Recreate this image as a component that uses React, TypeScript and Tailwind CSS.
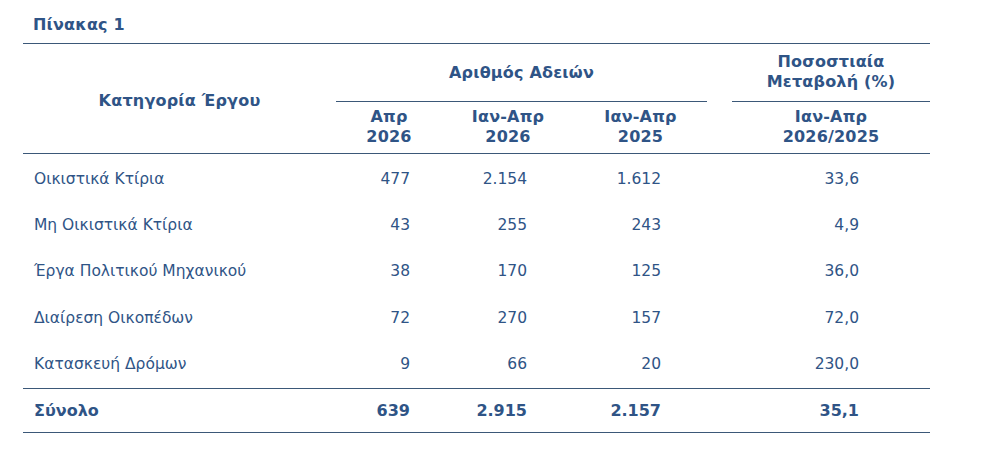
import React from 'react';

const rows = [
  { label: 'Οικιστικά Κτίρια', a: '477', b: '2.154', c: '1.612', d: '33,6' },
  { label: 'Μη Οικιστικά Κτίρια', a: '43', b: '255', c: '243', d: '4,9' },
  { label: 'Έργα Πολιτικού Μηχανικού', a: '38', b: '170', c: '125', d: '36,0' },
  { label: 'Διαίρεση Οικοπέδων', a: '72', b: '270', c: '157', d: '72,0' },
  { label: 'Κατασκευή Δρόμων', a: '9', b: '66', c: '20', d: '230,0' },
];

const cols = 'grid grid-cols-[313px_106px_132px_133px_25px_198px]';

export default function App() {
  return (
    <div
      className="w-[992px] h-[465px] bg-white text-[#2f5486] pl-[23px] pt-[15px]"
      style={{ fontFamily: '"DejaVu Sans", Verdana, sans-serif' }}
    >
      <h1 className="pl-[10px] text-[16px] font-bold leading-5 h-[28px] tracking-[0.2px]">Πίνακας 1</h1>

      <div className="w-[907px]">
        {/* header */}
        <div className={`${cols} border-t border-b border-[#3b5878] font-bold text-[16px] leading-5 tracking-[0.2px]`}>
          <div className="row-span-2 flex items-center justify-center pt-[4px]">Κατηγορία Έργου</div>
          <div className="col-span-3 h-[58px] flex items-center justify-center border-b border-[#3b5878]">
            Αριθμός Αδειών
          </div>
          <div />
          <div className="h-[58px] flex items-center justify-center text-center border-b border-[#3b5878] pb-[2px]">
            Ποσοστιαία
            <br />
            Μεταβολή (%)
          </div>
          <div className="h-[51px] flex items-center justify-center text-center pb-[2px]">
            Απρ
            <br />
            2026
          </div>
          <div className="flex items-center justify-center text-center pb-[2px]">
            Ιαν-Απρ
            <br />
            2026
          </div>
          <div className="flex items-center justify-center text-center pb-[2px]">
            Ιαν-Απρ
            <br />
            2025
          </div>
          <div />
          <div className="flex items-center justify-center text-center pb-[2px]">
            Ιαν-Απρ
            <br />
            2026/2025
          </div>
        </div>

        {/* body */}
        <div className="pt-[2px] text-[15.5px]">
          {rows.map((r) => (
            <div key={r.label} className={`${cols} h-[46.4px] items-center`}>
              <div className="pl-[11px]">{r.label}</div>
              <div className="text-right pr-[32px]">{r.a}</div>
              <div className="text-right pr-[47px]">{r.b}</div>
              <div className="text-right pr-[46px]">{r.c}</div>
              <div />
              <div className="text-right pr-[71px]">{r.d}</div>
            </div>
          ))}
        </div>

        {/* total */}
        <div className={`${cols} h-[45px] pt-[2px] items-center border-t border-b border-[#3b5878] font-bold text-[16px]`}>
          <div className="pl-[11px]">Σύνολο</div>
          <div className="text-right pr-[32px]">639</div>
          <div className="text-right pr-[47px]">2.915</div>
          <div className="text-right pr-[46px]">2.157</div>
          <div />
          <div className="text-right pr-[71px]">35,1</div>
        </div>
      </div>
    </div>
  );
}
